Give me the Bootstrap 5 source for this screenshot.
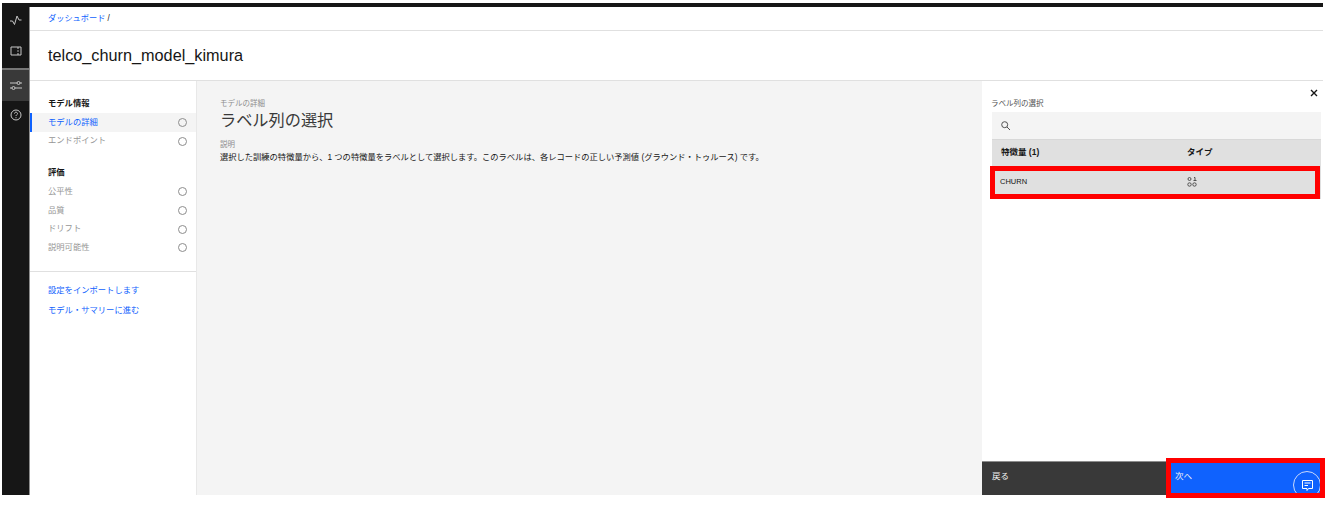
<!DOCTYPE html>
<html lang="ja">
<head>
<meta charset="utf-8">
<title>ラベル列の選択</title>
<link href="https://cdn.jsdelivr.net/npm/bootstrap@5.3.0/dist/css/bootstrap.min.css" rel="stylesheet">
<style>
html,body{height:100%;overflow:hidden;background:#fff}
body{font-family:"Liberation Sans","Noto Sans CJK JP",sans-serif;color:#161616;position:relative}
.shell{position:absolute;left:2px;top:3px;width:1321px;height:492px;border-top:4px solid #161616}
.rail{width:28px;background:#161616;border-right:1px solid #8d8d8d;flex:none;color:#c6c6c6}
.rail-a{height:26px}
.rail-b{height:35px}
.rail-sep{height:2px;background:#777}
.rail-active{background:#393939;height:31px}
.rail-c{height:28px}
.crumb{height:24px;padding-left:18px;font-size:8.2px;border-bottom:1px solid #e0e0e0;line-height:24px}
.crumb a,.side-link{color:#0f62fe;text-decoration:none}
.title-bar{height:50px;padding-left:18px;font-size:16.25px;border-bottom:1px solid #e0e0e0;line-height:49px}
.side{width:167px;border-right:1px solid #e8e8e8;flex:none;padding-top:13px;font-size:8.3px}
.side-h{height:19px;line-height:19px;padding-left:18px;font-weight:700}
.side-item{height:18.7px;padding-left:18px;padding-right:9px;color:#969696}
.side-item>span:first-child{margin-bottom:1px}
.side-item.on{color:#0f62fe;background:#f4f4f4;box-shadow:inset 2px 0 0 #0f62fe}
.side-dot{width:9px;height:9px;border:1px solid #8d8d8d;border-radius:50%}
.side-gap{height:13px}
.side-rule{height:1px;background:#e0e0e0;margin-top:14px;margin-bottom:8px}
.side-link{display:block;height:20px;line-height:20px;padding-left:18px}
.center{background:#f4f4f4;padding:17px 23px;font-size:8.27px;min-width:0}
.eyebrow{font-size:7.5px;color:#8d8d8d;line-height:11px}
.eyebrow-gap{margin-bottom:1px}
.big{font-size:16.2px;line-height:22px;color:#393939;margin:0 0 8px;font-weight:400}
.desc{line-height:13px;margin:0;white-space:nowrap}
.panel{width:341px;flex:none;position:relative;background:#fff}
.panel-body{padding:17px 2px 0 10px}
.close-x{position:absolute;right:5px;top:8px;width:8px;height:8px;color:#161616}
.panel-label{font-size:7.5px;color:#525252;line-height:11px;margin-bottom:3px;margin-left:-1px}
.search{height:27px;background:#f4f4f4;padding-left:9px;color:#525252}
.grid-head{height:27px;background:#e0e0e0;font-size:8.5px;font-weight:700;border-top:1px solid #d8d8d8;padding-bottom:2px}
.grid-row{height:33px;background:#e0e0e0;font-size:7.5px;padding-bottom:2px}
.col-a{width:195px;padding-left:9px;flex:none}
.col-a-row{padding-left:8px}
.foot{height:34px;border-top:1px solid #8d8d8d;font-size:8.5px;color:#f4f4f4}
.foot-back{width:184px;background:#393939;padding:8px 10px}
.foot-next{background:#0f62fe;padding:8px 9px;position:relative;overflow:hidden}
.chat{position:absolute;left:127px;top:9px;width:28px;height:28px;border:1px solid #c9d8fb;border-radius:50%;color:#fff}
.mark-box{position:absolute;border:5px solid #f00;pointer-events:none}
.mark-row{left:990px;top:166px;width:330px;height:33px}
.mark-next{left:1166px;top:458px;width:159px;height:40px}
</style>
</head>
<body>
<div class="shell d-flex">
  <nav class="rail d-flex flex-column">
    <div class="rail-a d-flex align-items-center justify-content-center">
      <svg width="12" height="10" viewBox="0 0 12 10" fill="none" stroke="currentColor" stroke-width="1"><path d="M0 6h2.5l2 3.5L7 1l2 4h2.5"/></svg>
    </div>
    <div class="rail-b d-flex align-items-center justify-content-center">
      <svg width="12" height="10" viewBox="0 0 12 10" fill="none" stroke="currentColor" stroke-width="1"><path d="M1 1h10v8H1zM8 1v2M8 4.2v1.6M8 7v2"/></svg>
    </div>
    <div class="rail-sep"></div>
    <div class="rail-active d-flex align-items-center justify-content-center">
      <svg width="12" height="11" viewBox="0 0 12 11" fill="none" stroke="currentColor" stroke-width="1"><path d="M0 3h7M10 3h2M0 8h2M5 8h7"/><circle cx="8.5" cy="3" r="1.5"/><circle cx="3.5" cy="8" r="1.5"/></svg>
    </div>
    <div class="rail-c d-flex align-items-center justify-content-center">
      <svg width="12" height="12" viewBox="0 0 12 12" fill="none" stroke="currentColor" stroke-width="1"><circle cx="6" cy="6" r="5"/><path d="M4.5 4.6C4.5 3.7 5.2 3.2 6 3.2s1.5.6 1.5 1.4c0 1.1-1.5 1.2-1.5 2.4"/><path d="M6 8.2v1"/></svg>
    </div>
  </nav>
  <div class="flex-grow-1 d-flex flex-column" style="min-width:0">
    <div class="crumb"><a href="#">ダッシュボード</a> /</div>
    <div class="title-bar">telco_churn_model_kimura</div>
    <div class="d-flex flex-grow-1" style="min-height:0">
      <aside class="side">
        <div class="side-h">モデル情報</div>
        <div class="side-item on d-flex align-items-center justify-content-between"><span>モデルの詳細</span><span class="side-dot"></span></div>
        <div class="side-item d-flex align-items-center justify-content-between"><span>エンドポイント</span><span class="side-dot"></span></div>
        <div class="side-gap"></div>
        <div class="side-h">評価</div>
        <div class="side-item d-flex align-items-center justify-content-between"><span>公平性</span><span class="side-dot"></span></div>
        <div class="side-item d-flex align-items-center justify-content-between"><span>品質</span><span class="side-dot"></span></div>
        <div class="side-item d-flex align-items-center justify-content-between"><span>ドリフト</span><span class="side-dot"></span></div>
        <div class="side-item d-flex align-items-center justify-content-between"><span>説明可能性</span><span class="side-dot"></span></div>
        <div class="side-rule"></div>
        <a class="side-link" href="#">設定をインポートします</a>
        <a class="side-link" href="#">モデル・サマリーに進む</a>
      </aside>
      <main class="center flex-grow-1">
        <div class="eyebrow">モデルの詳細</div>
        <h1 class="big">ラベル列の選択</h1>
        <div class="eyebrow eyebrow-gap">説明</div>
        <p class="desc">選択した訓練の特徴量から、1 つの特徴量をラベルとして選択します。このラベルは、各レコードの正しい予測値 (グラウンド・トゥルース) です。</p>
      </main>
      <section class="panel d-flex flex-column">
        <svg class="close-x" viewBox="0 0 8 8" fill="none" stroke="currentColor" stroke-width="1.4"><path d="M1 1l6 6M7 1L1 7"/></svg>
        <div class="panel-body flex-grow-1">
          <div class="panel-label">ラベル列の選択</div>
          <div class="search d-flex align-items-center">
            <svg width="9" height="9" viewBox="0 0 9 9" fill="none" stroke="currentColor" stroke-width="1"><circle cx="3.7" cy="3.7" r="3"/><path d="M6 6l3 3"/></svg>
          </div>
          <div class="grid-head d-flex align-items-center"><div class="col-a">特徴量 (1)</div><div>タイプ</div></div>
          <div class="grid-row d-flex align-items-center"><div class="col-a col-a-row">CHURN</div>
            <svg width="10" height="10" viewBox="0 0 10 10" fill="none" stroke="#525252" stroke-width="1"><circle cx="2.5" cy="2" r="1.5"/><path d="M7 .5h1v3M6.5 3.5h3"/><circle cx="2.5" cy="7.5" r="1.7"/><circle cx="7.5" cy="7.5" r="1.7"/></svg>
          </div>
        </div>
        <div class="foot d-flex">
          <div class="foot-back">戻る</div>
          <div class="foot-next flex-grow-1">次へ
            <div class="chat d-flex align-items-center justify-content-center">
              <svg width="13" height="13" viewBox="0 0 13 13" fill="none" stroke="currentColor" stroke-width="1"><path d="M1.5 1.5h10v8H7.5l-1.5 2v-2H1.5z"/><path d="M3.5 4h6M3.5 6.5h3.5"/></svg>
            </div>
          </div>
        </div>
      </section>
    </div>
  </div>
</div>
<div class="mark-box mark-row"></div>
<div class="mark-box mark-next"></div>
</body>
</html>
